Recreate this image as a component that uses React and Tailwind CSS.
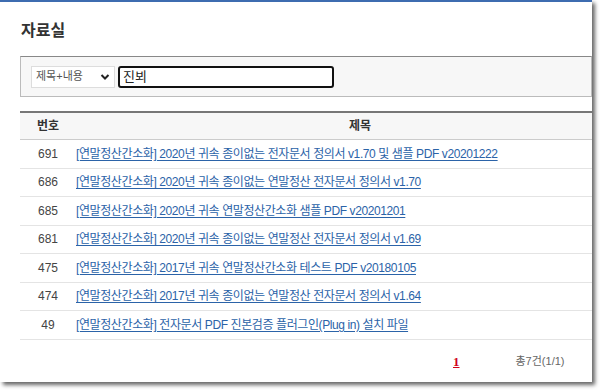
const rows = [
  { no: 691, title: "[연말정산간소화] 2020년 귀속 종이없는 전자문서 정의서 v1.70 및 샘플 PDF v20201222" },
  { no: 686, title: "[연말정산간소화] 2020년 귀속 종이없는 연말정산 전자문서 정의서 v1.70" },
  { no: 685, title: "[연말정산간소화] 2020년 귀속 연말정산간소화 샘플 PDF v20201201" },
  { no: 681, title: "[연말정산간소화] 2020년 귀속 종이없는 연말정산 전자문서 정의서 v1.69" },
  { no: 475, title: "[연말정산간소화] 2017년 귀속 연말정산간소화 테스트 PDF v20180105" },
  { no: 474, title: "[연말정산간소화] 2017년 귀속 종이없는 연말정산 전자문서 정의서 v1.64" },
  { no: 49, title: "[연말정산간소화] 전자문서 PDF 진본검증 플러그인(Plug in) 설치 파일" },
];

export default function App() {
  return (
    <div
      className="h-[390px] w-[600px] overflow-hidden bg-white"
      style={{ fontFamily: '"Liberation Sans", "Noto Sans CJK KR", sans-serif' }}
    >
      <div className="h-[382px] w-[592px] overflow-hidden border-t-2 border-[#3d6cb0] bg-white shadow-[3px_3px_4px_rgba(0,0,0,0.6)]">
        <h1 className="ml-[21px] mt-[19px] text-[16px] font-bold leading-[20px] text-[#333]">자료실</h1>

        <div className="ml-[20px] mt-[15px] flex h-[41px] items-center gap-[3px] border border-[#bbb] border-t-[#888] bg-[#f7f7f7] pl-[10px]">
          <div className="flex h-[22px] w-[84px] items-center justify-between border border-[#ddd] bg-white pl-[4px] pr-[4px] text-[11px] text-[#555]">
            <span>제목+내용</span>
            <svg width="10" height="8" viewBox="0 0 10 8">
              <path d="M1.5 2 L5 5.5 L8.5 2" fill="none" stroke="#222" strokeWidth="2" />
            </svg>
          </div>
          <div className="flex h-[22px] w-[216px] items-center rounded-[3px] border-2 border-[#111] bg-white pl-[3px] text-[13px] text-[#222]">
            진뵈
          </div>
        </div>

        <div className="ml-[20px] mt-[14px] w-[572px]">
          <div className="flex h-[29px] items-center border-b border-t-2 border-[#ccc] border-t-[#777] bg-[#f7f7f7] text-[12px] font-bold text-[#333]">
            <div className="w-[56px] text-center">번호</div>
            <div className="flex-1 pl-[52px] text-center">제목</div>
          </div>
          {rows.map((r) => (
            <div key={r.no} className="flex h-[28.5px] items-center border-b border-[#e4e4e4] text-[12px] last:border-b-2 last:border-[#a9b8cc]">
              <div className="w-[56px] text-center text-[#444]">{r.no}</div>
              <a href="#" className="whitespace-nowrap tracking-[-0.4px] text-[#2b63a8] underline decoration-[#2b63a8] underline-offset-2">
                {r.title}
              </a>
            </div>
          ))}
          <div className="mt-[12px] flex items-center text-[11px]">
            <span
              className="ml-[433px] text-[13px] font-bold text-[#d0021b] underline"
              style={{ fontFamily: '"Liberation Serif", serif' }}
            >
              1
            </span>
            <span className="ml-[56px] text-[#666]">총7건(1/1)</span>
          </div>
        </div>
      </div>
    </div>
  );
}
